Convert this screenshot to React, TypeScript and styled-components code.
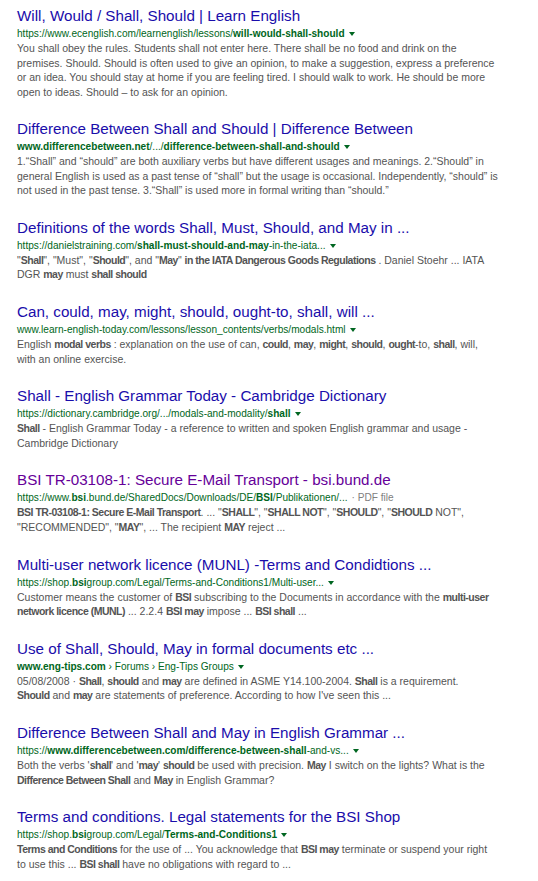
import React from "react";
import styled, { createGlobalStyle } from "styled-components";

const Global = createGlobalStyle`
  html, body { margin: 0; padding: 0; background: #fff; }
  body { font-family: "Liberation Sans", Arial, sans-serif; }
`;

const Page = styled.div`
  display: flex;
  flex-direction: column;
  gap: 20.2px;
  padding: 6px 0 0 17px;
`;

const Result = styled.div`
  display: flex;
  flex-direction: column;
`;

const Title = styled.a<{ $visited?: boolean }>`
  font-size: 15.2px;
  line-height: 20px;
  color: ${(p) => (p.$visited ? "#660099" : "#1a0dab")};
  text-decoration: none;
  white-space: nowrap;
`;

const UrlRow = styled.div`
  display: flex;
  align-items: center;
  font-size: 10.1px;
  line-height: 15px;
  color: #006621;
  white-space: nowrap;
`;

const Caret = styled.span`
  display: inline-block;
  width: 0;
  height: 0;
  margin-left: 4px;
  margin-top: 1px;
  border-left: 3px solid transparent;
  border-right: 3px solid transparent;
  border-top: 4px solid #006621;
`;

const Meta = styled.span`
  color: #808080;
  margin-left: 4px;
`;

const Snippet = styled.div`
  font-size: 10.5px;
  line-height: 14.5px;
  color: #545454;
  b { font-weight: bold; color: #545454; letter-spacing: -0.5px; }
`;

const Line = styled.div`
  white-space: nowrap;
`;

type R = {
  title: string;
  visited?: boolean;
  url: React.ReactNode;
  caret?: boolean;
  meta?: string;
  lines: React.ReactNode[];
};

const results: R[] = [
  {
    title: "Will, Would / Shall, Should | Learn English",
    url: (
      <>
        https://www.ecenglish.com/learnenglish/lessons/<b>will-would-shall-should</b>
      </>
    ),
    caret: true,
    lines: [
      "You shall obey the rules. Students shall not enter here. There shall be no food and drink on the",
      "premises. Should. Should is often used to give an opinion, to make a suggestion, express a preference",
      "or an idea. You should stay at home if you are feeling tired. I should walk to work. He should be more",
      "open to ideas. Should \u2013 to ask for an opinion.",
    ],
  },
  {
    title: "Difference Between Shall and Should | Difference Between",
    url: (
      <>
        <b>www.differencebetween.net</b>/.../<b>difference-between-shall-and-should</b>
      </>
    ),
    caret: true,
    lines: [
      "1.\u201CShall\u201D and \u201Cshould\u201D are both auxiliary verbs but have different usages and meanings. 2.\u201CShould\u201D in",
      "general English is used as a past tense of \u201Cshall\u201D but the usage is occasional. Independently, \u201Cshould\u201D is",
      "not used in the past tense. 3.\u201CShall\u201D is used more in formal writing than \u201Cshould.\u201D",
    ],
  },
  {
    title: "Definitions of the words Shall, Must, Should, and May in ...",
    url: (
      <>
        https://danielstraining.com/<b>shall-must-should-and-may</b>-in-the-iata...
      </>
    ),
    caret: true,
    lines: [
      <>
        "<b>Shall</b>", "Must", "<b>Should</b>", and "<b>May</b>" <b>in the IATA Dangerous Goods Regulations</b> . Daniel Stoehr ... IATA
      </>,
      <>
        DGR <b>may</b> must <b>shall should</b>
      </>,
    ],
  },
  {
    title: "Can, could, may, might, should, ought-to, shall, will ...",
    url: <>www.learn-english-today.com/lessons/lesson_contents/verbs/modals.html</>,
    caret: true,
    lines: [
      <>
        English <b>modal verbs</b> : explanation on the use of can, <b>could</b>, <b>may</b>, <b>might</b>, <b>should</b>, <b>ought</b>-to, <b>shall</b>, will,
      </>,
      "with an online exercise.",
    ],
  },
  {
    title: "Shall - English Grammar Today - Cambridge Dictionary",
    url: (
      <>
        https://dictionary.cambridge.org/.../modals-and-modality/<b>shall</b>
      </>
    ),
    caret: true,
    lines: [
      <>
        <b>Shall</b> - English Grammar Today - a reference to written and spoken English grammar and usage -
      </>,
      "Cambridge Dictionary",
    ],
  },
  {
    title: "BSI TR-03108-1: Secure E-Mail Transport - bsi.bund.de",
    visited: true,
    url: (
      <>
        https://www.<b>bsi</b>.bund.de/SharedDocs/Downloads/DE/<b>BSI</b>/Publikationen/...
      </>
    ),
    meta: "\u00B7 PDF file",
    lines: [
      <>
        <b>BSI TR-03108-1: Secure E-Mail Transport</b>. ... "<b>SHALL</b>", "<b>SHALL NOT</b>", "<b>SHOULD</b>", "<b>SHOULD</b> NOT",
      </>,
      <>
        "RECOMMENDED", "<b>MAY</b>", ... The recipient <b>MAY</b> reject ...
      </>,
    ],
  },
  {
    title: "Multi-user network licence (MUNL) -Terms and Condidtions ...",
    url: <>https://shop.<b>bsi</b>group.com/Legal/Terms-and-Conditions1/Multi-user...</>,
    caret: true,
    lines: [
      <>
        Customer means the customer of <b>BSI</b> subscribing to the Documents in accordance with the <b>multi-user</b>
      </>,
      <>
        <b>network licence (MUNL)</b> ... 2.2.4 <b>BSI may</b> impose ... <b>BSI shall</b> ...
      </>,
    ],
  },
  {
    title: "Use of Shall, Should, May in formal documents etc ...",
    url: (
      <>
        <b>www.eng-tips.com</b> &rsaquo; Forums &rsaquo; Eng-Tips Groups
      </>
    ),
    caret: true,
    lines: [
      <>
        05/08/2008 &middot; <b>Shall</b>, <b>should</b> and <b>may</b> are defined in ASME Y14.100-2004. <b>Shall</b> is a requirement.
      </>,
      <>
        <b>Should</b> and <b>may</b> are statements of preference. According to how I've seen this ...
      </>,
    ],
  },
  {
    title: "Difference Between Shall and May in English Grammar ...",
    url: (
      <>
        https://<b>www.differencebetween.com/difference-between-shall</b>-and-vs...
      </>
    ),
    caret: true,
    lines: [
      <>
        Both the verbs '<b>shall</b>' and '<b>may</b>' <b>should</b> be used with precision. <b>May</b> I switch on the lights? What is the
      </>,
      <>
        <b>Difference Between Shall</b> and <b>May</b> in English Grammar?
      </>,
    ],
  },
  {
    title: "Terms and conditions. Legal statements for the BSI Shop",
    url: (
      <>
        https://shop.<b>bsi</b>group.com/Legal/<b>Terms-and-Conditions1</b>
      </>
    ),
    caret: true,
    lines: [
      <>
        <b>Terms and Conditions</b> for the use of ... You acknowledge that <b>BSI may</b> terminate or suspend your right
      </>,
      <>
        to use this ... <b>BSI shall</b> have no obligations with regard to ...
      </>,
    ],
  },
];

export default function App() {
  return (
    <>
      <Global />
      <Page>
        {results.map((r, i) => (
          <Result key={i}>
            <Title href="#" $visited={r.visited}>
              {r.title}
            </Title>
            <UrlRow>
              <span>{r.url}</span>
              {r.caret && <Caret />}
              {r.meta && <Meta>{r.meta}</Meta>}
            </UrlRow>
            <Snippet>
              {r.lines.map((l, j) => (
                <Line key={j}>{l}</Line>
              ))}
            </Snippet>
          </Result>
        ))}
      </Page>
    </>
  );
}
